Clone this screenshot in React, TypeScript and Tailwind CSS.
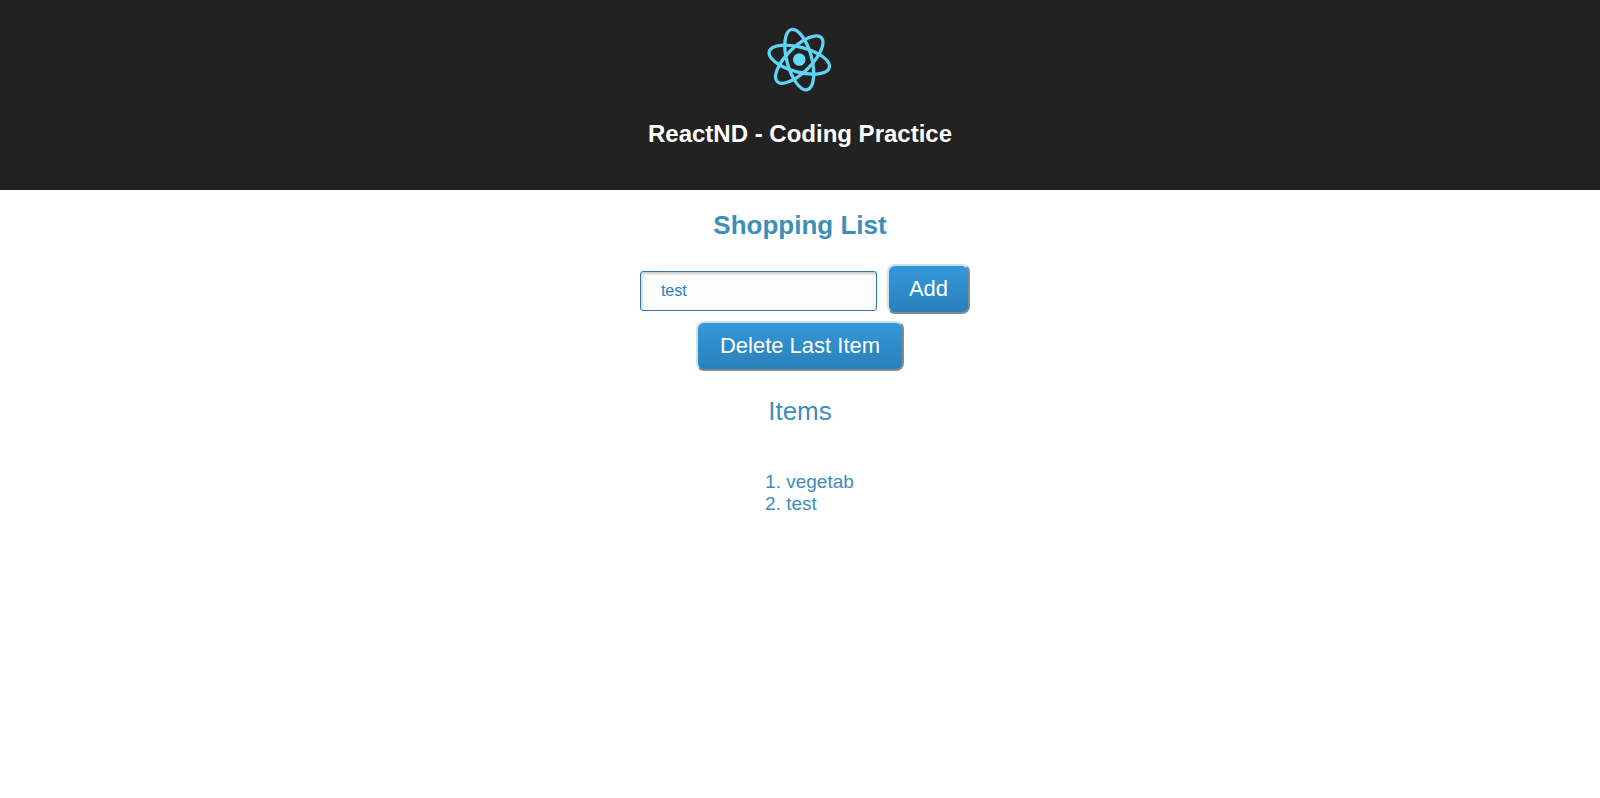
import { useState } from "react";
import type { FormEvent } from "react";

const buttonClass =
  "rounded-lg border-2 border-t-[#cfe0ea] border-l-[#cfe0ea] border-r-[#808b93] border-b-[#808b93] bg-linear-to-b from-[#3498db] to-[#2980b9] px-5 py-2.5 text-[22px] leading-[26px] text-white";

function Logo() {
  return (
    <svg viewBox="-13.75 -13.85 28 28" className="mx-auto size-20" role="img" aria-label="React logo">
      <circle r="2.2" fill="#61dafb" />
      <g stroke="#5fd5f5" strokeWidth="1.15" fill="none" transform="rotate(15)">
        <ellipse rx="10.9" ry="4.35" />
        <ellipse rx="10.9" ry="4.35" transform="rotate(60)" />
        <ellipse rx="10.9" ry="4.35" transform="rotate(120)" />
      </g>
    </svg>
  );
}

export default function App() {
  const [value, setValue] = useState("test");
  const [items, setItems] = useState(["vegetab", "test"]);

  const addItem = (event: FormEvent) => {
    event.preventDefault();
    setItems([...items, value]);
  };

  return (
    <div className="text-center font-['Liberation_Sans',Arial,sans-serif] text-[#3d8eb9]">
      <header className="bg-[#222] px-5 pt-5 pb-[42px] text-white">
        <Logo />
        <h1 className="mt-5 text-2xl leading-7 font-bold">ReactND - Coding Practice</h1>
      </header>
      <main className="flex flex-col items-center pt-5">
        <h2 className="text-[26px] leading-[30px] font-bold">Shopping List</h2>
        <form onSubmit={addItem} className="mt-6 flex items-end gap-2.5 pl-2.5">
          <input
            type="text"
            aria-label="New item"
            value={value}
            onChange={(event) => setValue(event.target.value)}
            className="mb-[3px] h-10 w-[237px] rounded-[3px] border border-[#3078b4] bg-[#fcfcfc] px-5 text-base text-[#2980b9] shadow-[inset_1px_2px_3px_rgba(0,0,0,0.2)] outline-none"
          />
          <button type="submit" className={buttonClass}>Add</button>
        </form>
        <button
          type="button"
          onClick={() => setItems(items.slice(0, -1))}
          className={`mt-[7px] min-w-52 ${buttonClass}`}
        >
          Delete Last Item
        </button>
        <h3 className="mt-[25px] text-[26px] leading-[30px]">Items</h3>
        <ol className="mt-[45px] list-decimal pl-10 text-left text-[19px] leading-[22px]">
          {items.map((item, index) => (
            <li key={index}>{item}</li>
          ))}
        </ol>
      </main>
    </div>
  );
}
